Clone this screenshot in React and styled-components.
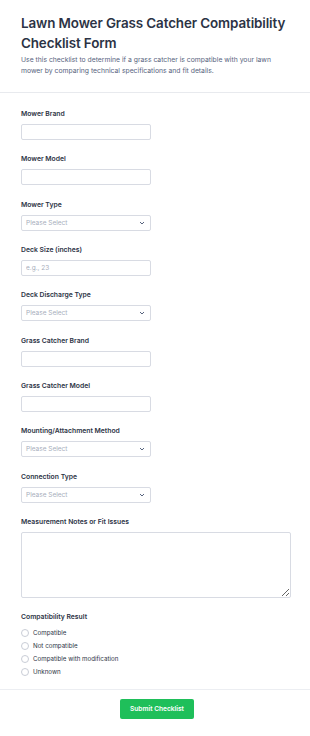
import React from "react";
import styled, { createGlobalStyle } from "styled-components";

const GlobalStyle = createGlobalStyle`
  body {
    margin: 0;
    background: #ffffff;
    font-family: Inter, "Noto Sans", sans-serif;
    color: #2c3345;
  }
`;

const Page = styled.div`
  width: 310px;
  min-height: 736px;
  background: #fff;
`;

const Header = styled.header`
  padding: 14px 21px 16px;
  border-bottom: 1px solid #e8eaee;
`;

const Title = styled.h1`
  margin: 0 0 2px;
  font-size: 13.4px;
  line-height: 19.5px;
  font-weight: 600;
  letter-spacing: -0.1px;
  color: #2c3345;
`;

const Subtitle = styled.p`
  margin: 0;
  font-size: 6.8px;
  line-height: 10.5px;
  color: #57647e;
`;

const Body = styled.div`
  display: flex;
  flex-direction: column;
  gap: 14.33px;
  padding: 16px 21px 11px;
  border-bottom: 1px solid #eceef2;
`;

const Field = styled.div`
  display: flex;
  flex-direction: column;
  gap: 5px;
`;

const Label = styled.label`
  font-size: 6.8px;
  line-height: 10px;
  font-weight: 600;
  color: #2c3345;
`;

const TextInput = styled.input`
  box-sizing: border-box;
  width: 130px;
  height: 16px;
  margin: 0;
  padding: 0 4px;
  border: 1px solid #d8dbe3;
  border-radius: 2px;
  font-family: inherit;
  font-size: 6.5px;
  color: #2c3345;
  background: #fff;
  &::placeholder {
    color: #a7adbb;
  }
`;

const SelectBox = styled.div`
  box-sizing: border-box;
  width: 130px;
  height: 16px;
  padding: 0 5px 0 4px;
  border: 1px solid #d8dbe3;
  border-radius: 2px;
  display: flex;
  align-items: center;
  justify-content: space-between;
  font-size: 6.5px;
  color: #a7adbb;
`;

const TextArea = styled.textarea`
  box-sizing: border-box;
  width: 270px;
  height: 66px;
  margin: 0;
  border: 1px solid #d8dbe3;
  border-radius: 2px;
  font-family: inherit;
  resize: vertical;
`;

const RadioList = styled.div`
  display: flex;
  flex-direction: column;
  margin-top: -1px;
`;

const RadioRow = styled.div`
  display: flex;
  align-items: center;
  gap: 4px;
  height: 13px;
  font-size: 6.2px;
  color: #2c3345;
`;

const Circle = styled.span`
  box-sizing: border-box;
  width: 8px;
  height: 8px;
  border-radius: 50%;
  border: 1px solid #c9cdd6;
  background: #fff;
`;

const Footer = styled.div`
  display: flex;
  justify-content: center;
  padding: 9px 0 0 4px;
`;

const SubmitButton = styled.button`
  width: 74px;
  height: 20px;
  border: none;
  border-radius: 2px;
  background: #1fbf5a;
  color: #fff;
  font-family: inherit;
  font-size: 6.6px;
  font-weight: 600;
`;

const Chevron = () => (
  <svg width="6" height="4" viewBox="0 0 6 4">
    <path d="M1 1l2 2 2-2" fill="none" stroke="#57647e" strokeWidth="1" />
  </svg>
);

const fields = [
  { label: "Mower Brand", type: "text" },
  { label: "Mower Model", type: "text" },
  { label: "Mower Type", type: "select" },
  { label: "Deck Size (inches)", type: "text", placeholder: "e.g., 23" },
  { label: "Deck Discharge Type", type: "select" },
  { label: "Grass Catcher Brand", type: "text" },
  { label: "Grass Catcher Model", type: "text" },
  { label: "Mounting/Attachment Method", type: "select" },
  { label: "Connection Type", type: "select" },
];

const results = ["Compatible", "Not compatible", "Compatible with modification", "Unknown"];

export default function App() {
  return (
    <Page>
      <GlobalStyle />
      <Header>
        <Title>Lawn Mower Grass Catcher Compatibility Checklist Form</Title>
        <Subtitle>
          Use this checklist to determine if a grass catcher is compatible with your lawn
          mower by comparing technical specifications and fit details.
        </Subtitle>
      </Header>
      <Body>
        {fields.map((f) => (
          <Field key={f.label}>
            <Label>{f.label}</Label>
            {f.type === "select" ? (
              <SelectBox>
                Please Select
                <Chevron />
              </SelectBox>
            ) : (
              <TextInput placeholder={f.placeholder || ""} />
            )}
          </Field>
        ))}
        <Field>
          <Label>Measurement Notes or Fit Issues</Label>
          <TextArea />
        </Field>
        <Field>
          <Label>Compatibility Result</Label>
          <RadioList>
            {results.map((r) => (
              <RadioRow key={r}>
                <Circle />
                {r}
              </RadioRow>
            ))}
          </RadioList>
        </Field>
      </Body>
      <Footer>
        <SubmitButton>Submit Checklist</SubmitButton>
      </Footer>
    </Page>
  );
}
